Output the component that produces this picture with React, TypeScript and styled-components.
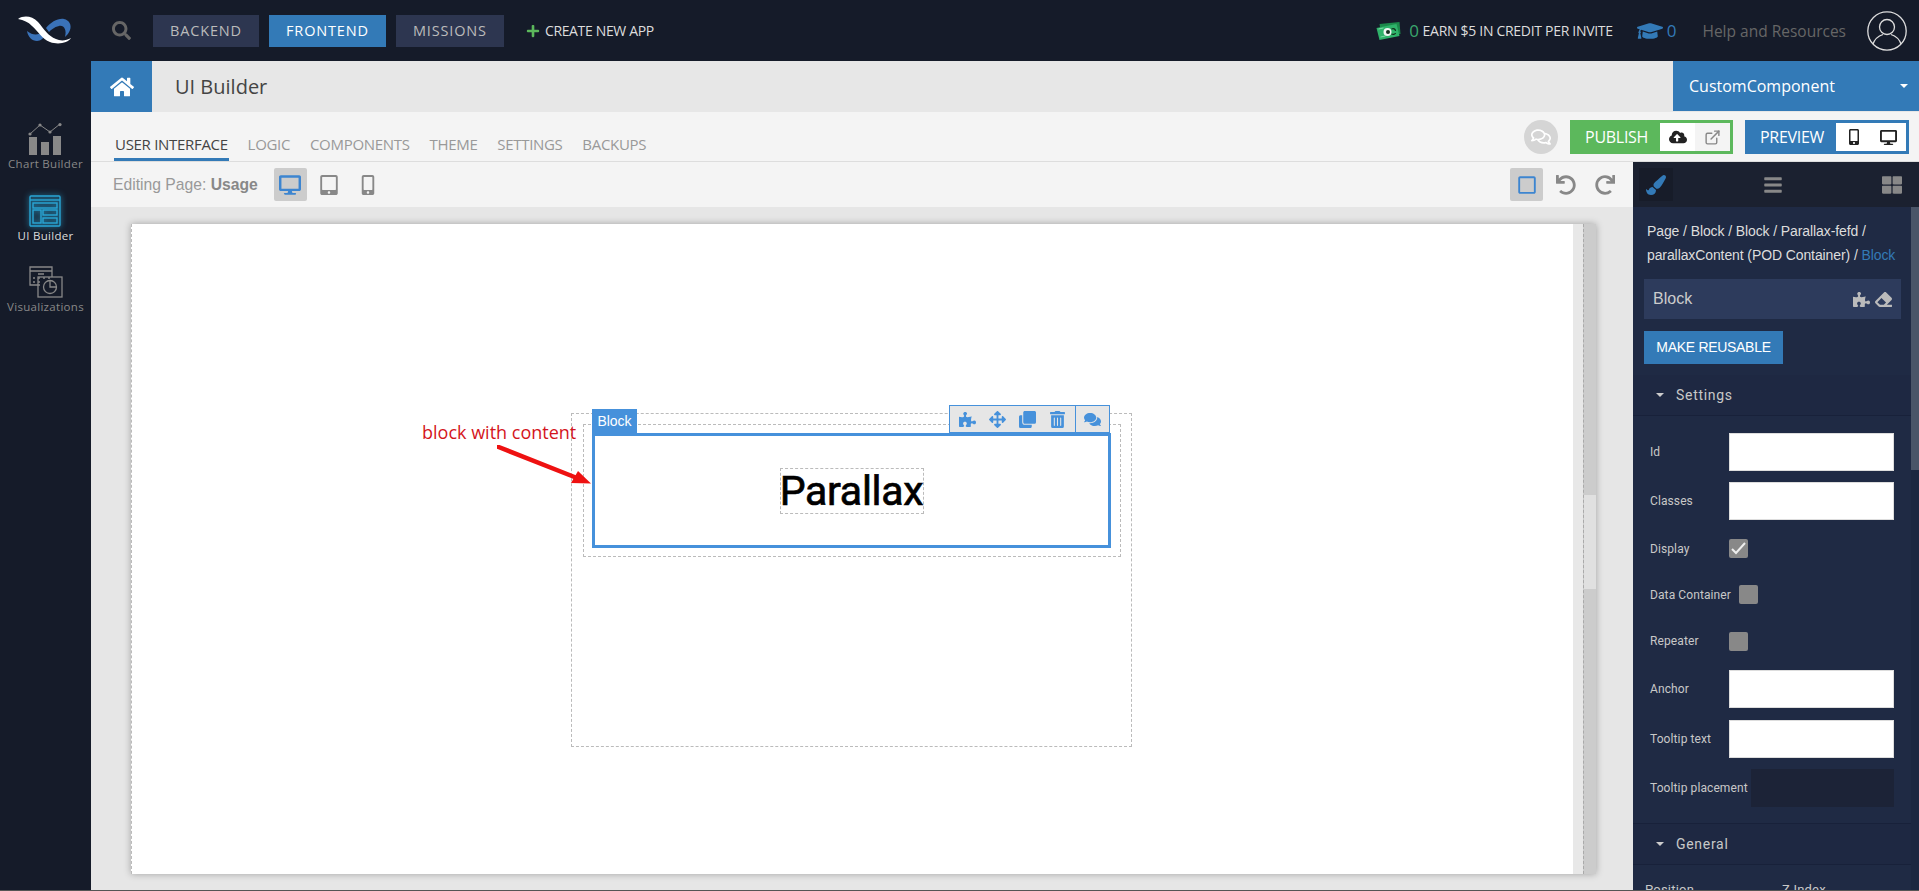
import React, { FC } from 'react';
import styled, { createGlobalStyle } from 'styled-components';
import {
    FaArrowsAlt,
    FaBars,
    FaClone,
    FaCloudUploadAlt,
    FaComments,
    FaDesktop,
    FaEraser,
    FaGraduationCap,
    FaHome,
    FaMobileAlt,
    FaPaintBrush,
    FaPlus,
    FaPuzzlePiece,
    FaRedo,
    FaRegComments,
    FaRegSquare,
    FaSearch,
    FaTabletAlt,
    FaThLarge,
    FaTrashAlt,
    FaUndo,
} from 'react-icons/fa';
import { FiExternalLink } from 'react-icons/fi';

const GlobalStyle = createGlobalStyle`
    html, body {
        margin: 0;
        padding: 0;
        height: 100%;
        overflow: hidden;
    }
    * {
        box-sizing: border-box;
    }
`;

const Root = styled.div`
    display: flex;
    flex-direction: column;
    height: 100vh;
    background: #151b29;
    border-bottom: 1px solid #555;
    font-family: 'Open Sans', sans-serif;
    overflow: hidden;
`;

const TopBar = styled.div`
    display: flex;
    align-items: center;
    flex: 0 0 61px;
    padding-left: 18px;
    background: #151b29;
`;

const LogoMark = styled.svg`
    width: 54px;
    height: 28px;
    margin-top: -1px;
`;

const SearchButton = styled.div`
    display: flex;
    margin: 0 22px 0 40px;
    color: #666;
    font-size: 19px;
`;

const NavButton = styled.div<{ $active?: boolean }>`
    display: flex;
    align-items: center;
    height: 32px;
    margin-right: 10px;
    padding: 0 17px;
    background: ${(p) => (p.$active ? '#337ab7' : '#2d3650')};
    color: ${(p) => (p.$active ? '#fff' : '#bbb')};
    font-size: 14.5px;
    letter-spacing: 0.85px;
`;

const CreateLink = styled.div`
    display: flex;
    align-items: center;
    gap: 5px;
    margin-left: 12px;
    color: #ddd;
    font-size: 14px;
    letter-spacing: -0.35px;

    svg {
        color: #5cb85c;
        font-size: 14px;
    }
`;

const TopRight = styled.div`
    display: flex;
    align-items: center;
    margin-left: auto;
    padding-right: 12px;
`;

const Credit = styled.div`
    display: flex;
    align-items: center;
    color: #ddd;
    font-size: 14px;
    letter-spacing: -0.3px;
`;

const CreditCount = styled.span`
    margin: 0 4px 0 7px;
    color: #3aa76d;
    font-size: 17px;
`;

const Learn = styled.div`
    display: flex;
    align-items: center;
    gap: 4px;
    margin-left: 24px;
    color: #337ab7;
    font-size: 17px;

    svg {
        font-size: 26px;
    }
`;

const HelpLink = styled.div`
    margin: 0 21px 0 26px;
    color: #666;
    font-size: 15.5px;
`;

const Body = styled.div`
    display: flex;
    flex: 1;
    min-height: 0;
`;

const Sidebar = styled.div`
    display: flex;
    flex-direction: column;
    align-items: center;
    flex: 0 0 91px;
    padding-top: 62px;
    background: #151b29;
`;

const SideItem = styled.div<{ $active?: boolean }>`
    display: flex;
    flex-direction: column;
    align-items: center;
    height: 71.5px;
    color: ${(p) => (p.$active ? '#ddd' : '#888')};
    font-size: 11.5px;
    letter-spacing: 0.3px;
    white-space: nowrap;

    svg {
        width: 34px;
        height: 32px;
        margin-bottom: 1px;
        ${(p) => p.$active && 'filter: drop-shadow(0 0 3px #2aa7d6);'}
    }
`;

const Main = styled.div`
    display: flex;
    flex-direction: column;
    flex: 1;
    min-width: 0;
`;

const Header = styled.div`
    display: flex;
    align-items: center;
    flex: 0 0 51px;
    background: #e7e7e7;
`;

const HomeButton = styled.div`
    display: flex;
    align-items: center;
    justify-content: center;
    width: 61px;
    height: 100%;
    background: #337ab7;
    color: #fff;
    font-size: 24px;
`;

const PageTitle = styled.div`
    margin-left: 23px;
    color: #444;
    font-size: 20px;
`;

const AppSelect = styled.div`
    display: flex;
    align-items: center;
    justify-content: space-between;
    width: 246px;
    height: 50px;
    margin-left: auto;
    margin-bottom: 1px;
    padding: 0 11px 0 16px;
    background: #337ab7;
    color: #fff;
    font-size: 16px;
`;

const Caret = styled.span<{ $color: string }>`
    display: inline-block;
    width: 0;
    height: 0;
    border-left: 4px solid transparent;
    border-right: 4px solid transparent;
    border-top: 4px solid ${(p) => p.$color};
`;

const TabsBar = styled.div`
    display: flex;
    align-items: flex-end;
    flex: 0 0 50px;
    padding: 0 10px 0 23px;
    background: #f4f4f4;
    border-bottom: 1px solid #ddd;
`;

const Tab = styled.div<{ $active?: boolean }>`
    height: 31px;
    margin-right: 17.8px;
    padding: 0 1px;
    border-bottom: 3px solid ${(p) => (p.$active ? '#337ab7' : 'transparent')};
    color: ${(p) => (p.$active ? '#444' : '#999')};
    font-size: 15px;
    letter-spacing: -0.3px;
    line-height: 28px;
    white-space: nowrap;
`;

const TabActions = styled.div`
    display: flex;
    align-items: center;
    gap: 12px;
    margin-left: auto;
    align-self: flex-start;
    margin-top: 8px;
`;

const ChatBubble = styled.div`
    display: flex;
    align-items: center;
    justify-content: center;
    width: 34px;
    height: 34px;
    border-radius: 50%;
    background: #d5d5d5;
    color: #fff;
    font-size: 20px;
`;

const ActionGroup = styled.div<{ $color: string }>`
    display: flex;
    align-items: center;
    height: 34px;
    border: 3px solid ${(p) => p.$color};
    background: ${(p) => p.$color};
    color: #fff;
    font-size: 16px;
    letter-spacing: -0.3px;
`;

const ActionLabel = styled.span`
    padding: 0 12px;
`;

const ActionIcon = styled.div<{ $shade?: boolean; $color: string; $size?: number }>`
    display: flex;
    align-items: center;
    justify-content: center;
    width: 35px;
    height: 28px;
    background: ${(p) => (p.$shade ? '#f4f4f4' : '#fff')};
    color: ${(p) => p.$color};
    font-size: ${(p) => p.$size || 16}px;
`;

const Workspace = styled.div`
    display: flex;
    flex: 1;
    min-height: 0;
`;

const Stage = styled.div`
    display: flex;
    flex-direction: column;
    flex: 1;
    min-width: 0;
    background: #e6e6e6;
`;

const EditBar = styled.div`
    display: flex;
    align-items: center;
    flex: 0 0 45px;
    padding: 0 6px 0 22px;
    background: #f4f4f4;
`;

const EditLabel = styled.div`
    margin-right: 16px;
    color: #999;
    font-family: 'Liberation Sans', Arial, sans-serif;
    font-size: 15.7px;

    b {
        color: #888;
    }
`;

const ToolButton = styled.div<{ $active?: boolean; $color?: string; $size?: number }>`
    display: flex;
    align-items: center;
    justify-content: center;
    width: 33px;
    height: 33px;
    margin-right: 6px;
    border-radius: 2px;
    background: ${(p) => (p.$active ? '#ccc' : 'transparent')};
    color: ${(p) => p.$color || '#888'};
    font-size: ${(p) => p.$size || 20}px;
`;

const EditRight = styled.div`
    display: flex;
    align-items: center;
    margin-left: auto;
`;

const Canvas = styled.div`
    flex: 1;
    min-height: 0;
    padding: 17px 37px 16px 40px;
`;

const PageFrame = styled.div`
    display: flex;
    height: 100%;
    background: #e8e8e8;
    box-shadow: 0 0 7px rgba(0, 0, 0, 0.3);
`;

const PageSheet = styled.div`
    flex: 1;
    min-width: 0;
    padding: 189px 0 0 439px;
    background: #fff;
    border-left: 1px dashed #bbb;
`;

const PageScroll = styled.div`
    display: flex;
    flex: 0 0 23px;
    padding-left: 10px;
`;

const PageTrack = styled.div`
    flex: 1;
    padding-top: 271px;
    background: #ccc;
    border-left: 1px dashed #aaa;
`;

const PageThumb = styled.div`
    height: 94px;
    background: #e0e0e0;
`;

const OuterDashed = styled.div`
    position: relative;
    width: 561px;
    height: 334px;
    padding: 10px 10px 0 11px;
    border: 1px dashed #bbb;
`;

const InnerDashed = styled.div`
    width: 538px;
    height: 133px;
    padding: 8px 9px 8px 8px;
    border: 1px dashed #bbb;
`;

const SelectedBlock = styled.div`
    position: relative;
    display: flex;
    align-items: center;
    justify-content: center;
    height: 100%;
    border: 3px solid #4691db;
`;

const BlockTag = styled.div`
    position: absolute;
    left: -3px;
    top: -27px;
    display: flex;
    align-items: center;
    justify-content: center;
    width: 45px;
    height: 24px;
    background: #4691db;
    color: #fff;
    font-family: 'Liberation Sans', Arial, sans-serif;
    font-size: 14px;
`;

const BlockTools = styled.div`
    position: absolute;
    right: -2px;
    top: -31px;
    display: flex;
    height: 28px;
    border: 1px solid #4691db;
    background: #e6e6e6;
    color: #4691db;
    font-size: 17px;
`;

const ToolGroup = styled.div<{ $divided?: boolean }>`
    display: flex;
    align-items: center;
    gap: 13px;
    padding: 0 ${(p) => (p.$divided ? 8 : 9)}px;
    ${(p) => p.$divided && 'border-left: 1px solid #4691db;'}
`;

const BlockText = styled.div`
    display: flex;
    align-items: center;
    justify-content: center;
    width: 144px;
    height: 46px;
    border: 1px dashed #bbb;
    color: #000;
    font-family: Roboto, Arial, sans-serif;
    font-size: 41px;
    font-weight: 400;
    letter-spacing: -0.3px;
    -webkit-text-stroke: 0.7px #000;
    white-space: nowrap;
`;

const Annotation = styled.div`
    position: absolute;
    left: -150px;
    top: 6px;
    color: #d4141c;
    font-size: 18px;
    white-space: nowrap;
`;

const AnnotationArrow = styled.svg`
    position: absolute;
    left: -75px;
    top: 31px;
    width: 96px;
    height: 42px;
`;

const Panel = styled.div`
    display: flex;
    flex-direction: column;
    flex: 0 0 286px;
    background: #1f2a44;
    font-family: 'Liberation Sans', Arial, sans-serif;
`;

const PanelTabs = styled.div`
    display: flex;
    align-items: center;
    justify-content: space-between;
    flex: 0 0 45px;
    padding: 0 17px 0 6px;
    background: #1b2130;
    color: #888;
    font-size: 20px;
`;

const BrushTab = styled.div`
    display: flex;
    align-items: center;
    justify-content: center;
    width: 34px;
    height: 33px;
    background: #171c29;
    color: #337ab7;
`;

const BarsIcon = styled(FaBars)`
    margin-right: 10px;
`;

const PanelBody = styled.div`
    display: flex;
    flex: 1;
    min-height: 0;
`;

const PanelContent = styled.div`
    flex: 1;
    min-width: 0;
    overflow: hidden;
`;

const PanelScroll = styled.div`
    flex: 0 0 8px;
    background: #1c2740;
`;

const PanelThumb = styled.div`
    height: 263px;
    background: #4a5568;
`;

const Crumbs = styled.div`
    padding: 12px 0 0 14px;
    color: #ddd;
    font-size: 14px;
    line-height: 24px;
    letter-spacing: -0.1px;
    white-space: nowrap;

    span {
        color: #337ab7;
    }
`;

const BlockRow = styled.div`
    display: flex;
    align-items: center;
    justify-content: space-between;
    height: 40px;
    margin: 12px 10px 0 11px;
    padding: 0 9px 0 9px;
    background: #2d3b5c;
    color: #ccc;
    font-size: 16px;
`;

const BlockRowIcons = styled.div`
    display: flex;
    gap: 5px;
    font-size: 17px;
    color: #bbb;
`;

const ReuseButton = styled.div`
    display: flex;
    align-items: center;
    justify-content: center;
    width: 139px;
    height: 33px;
    margin: 12px 0 11px 11px;
    padding-bottom: 2px;
    background: #337ab7;
    color: #fff;
    font-size: 14px;
    letter-spacing: -0.3px;
`;

const SectionHead = styled.div`
    display: flex;
    align-items: center;
    gap: 12px;
    height: 41px;
    padding-left: 23px;
    background: #1e2842;
    border-bottom: 1px solid #18213a;
    color: #c8c8c8;
    font-family: Roboto, Arial, sans-serif;
    font-size: 14px;
    letter-spacing: 0.7px;
`;

const FieldList = styled.div`
    padding: 11.5px 17px 10px 17px;
    border-bottom: 1px solid #18213a;
`;

const FieldRow = styled.div<{ $h: number }>`
    display: flex;
    align-items: center;
    height: ${(p) => p.$h}px;
`;

const FieldLabel = styled.div<{ $gap?: number }>`
    ${(p) => (p.$gap ? `margin-right: ${p.$gap}px;` : 'flex: 0 0 79px;')}
    color: #c8c8c8;
    font-family: Roboto, Arial, sans-serif;
    font-size: 12px;
    letter-spacing: 0.1px;
    white-space: nowrap;
`;

const TextInput = styled.div`
    flex: 1;
    height: 38px;
    background: #fff;
    border: 1px solid #ddd;
`;

const DarkSelect = styled.div`
    flex: 1;
    height: 38px;
    background: #1c2337;
`;

const CheckBox = styled.div`
    display: flex;
    align-items: center;
    justify-content: center;
    width: 19px;
    height: 19px;
    border-radius: 2px;
    background: #888;
`;

const ClippedLabels = styled.div`
    display: flex;
    gap: 88px;
    padding: 17px 0 0 12px;
    color: #c8c8c8;
    font-family: Roboto, Arial, sans-serif;
    font-size: 13px;
    letter-spacing: 0.2px;
`;

interface FieldProps {
    label: string;
    height: number;
    labelGap?: number;
    children: React.ReactNode;
}

const Field: FC<FieldProps> = ({ label, height, labelGap, children }) => (
    <FieldRow $h={height}>
        <FieldLabel $gap={labelGap}>{label}</FieldLabel>
        {children}
    </FieldRow>
);

const Logo = () => (
    <LogoMark viewBox="0 0 54 28">
        <path d="M28 12C33 6 40 2 46 3C51 4 54 9 52 14C51 17 49 19 47 21C49 14 46 9 41 10C36 11 33 14 31 16Z" fill="#3a72b8" />
        <path d="M9 15C10 21 14 25 19 25C23 25 25 22 27 20L24 16C21 19 15 20 9 15Z" fill="#3a72b8" />
        <path d="M0 3C6 -1 14 0 20 6C26 13 30 20 38 23C42 25 48 25 53 22C50 27 40 29 32 26C24 23 20 15 14 10C10 6 6 4 0 3Z" fill="#fff" />
    </LogoMark>
);

const MoneyIcon = () => (
    <svg width="27" height="20" viewBox="0 0 26 20">
        <path d="M4 3L24 1L25 13L6 15Z" fill="#1c8a4b" />
        <path d="M1 7L21 3L24 15L4 19Z" fill="#2fb36a" />
        <path d="M3 8L8 7M5 16L10 15" stroke="#7ad9a3" strokeWidth="1" />
        <circle cx="12" cy="11" r="4" fill="#f0f5f2" />
        <circle cx="12.5" cy="11" r="2" fill="#14301f" />
        <path d="M16 8C18 7 20 8 20 10M16 13C18 14 20 13 20 12" fill="none" stroke="#14301f" strokeWidth="1.2" />
    </svg>
);

const Avatar = () => (
    <svg width="40" height="40" viewBox="0 0 40 40" fill="none" stroke="#ddd" strokeWidth="1.3">
        <circle cx="20" cy="20" r="19.2" />
        <circle cx="20" cy="16" r="7.5" />
        <path d="M6 33C8 27 13 24.5 16 23.5M34 33C32 27 27 24.5 24 23.5" />
    </svg>
);

const ChartIcon = () => (
    <svg viewBox="0 0 34 32" fill="#888">
        <rect x="1" y="14" width="8" height="18" />
        <rect x="13" y="19" width="8" height="13" />
        <rect x="25" y="13" width="8" height="19" />
        <path d="M2 11L12 2L22 9L32 1" fill="none" stroke="#888" strokeWidth="1" />
        <circle cx="2" cy="11" r="1.6" />
        <circle cx="12" cy="2" r="1.6" />
        <circle cx="22" cy="9" r="1.6" />
        <circle cx="32" cy="1.6" r="1.6" />
    </svg>
);

const LayoutIcon = () => (
    <svg viewBox="0 0 34 32" fill="none" stroke="#2aa7d6" strokeWidth="1.4">
        <rect x="2" y="1" width="30" height="30" rx="1" />
        <path d="M2 5H32" />
        <rect x="5" y="8" width="24" height="5" />
        <rect x="5" y="15" width="8" height="13" />
        <rect x="15" y="15" width="14" height="5" />
        <rect x="15" y="23" width="14" height="5" />
    </svg>
);

const VisualIcon = () => (
    <svg viewBox="0 0 34 32" fill="none" stroke="#888" strokeWidth="1.3">
        <path d="M11 19H1V1H23V11" />
        <path d="M1 5H23M9 8H15M4 12H6M9 12H11M14 12H16M19 12H21M4 16H6M9 16H11" />
        <rect x="9" y="11" width="24" height="20" />
        <circle cx="21" cy="21" r="6.5" />
        <path d="M21 15V21H27" />
    </svg>
);

const CheckMark = () => (
    <svg width="15" height="13" viewBox="0 0 15 13" fill="none" stroke="#eee" strokeWidth="2">
        <path d="M1 7L5 11L14 1" />
    </svg>
);

const tabs = ['USER INTERFACE', 'LOGIC', 'COMPONENTS', 'THEME', 'SETTINGS', 'BACKUPS'];

export default function App() {
    return (
        <Root>
            <GlobalStyle />
            <TopBar>
                <Logo />
                <SearchButton>
                    <FaSearch />
                </SearchButton>
                <NavButton>BACKEND</NavButton>
                <NavButton $active>FRONTEND</NavButton>
                <NavButton>MISSIONS</NavButton>
                <CreateLink>
                    <FaPlus />
                    CREATE NEW APP
                </CreateLink>
                <TopRight>
                    <Credit>
                        <MoneyIcon />
                        <CreditCount>0</CreditCount>
                        EARN $5 IN CREDIT PER INVITE
                    </Credit>
                    <Learn>
                        <FaGraduationCap />0
                    </Learn>
                    <HelpLink>Help and Resources</HelpLink>
                    <Avatar />
                </TopRight>
            </TopBar>
            <Body>
                <Sidebar>
                    <SideItem>
                        <ChartIcon />
                        Chart Builder
                    </SideItem>
                    <SideItem $active>
                        <LayoutIcon />
                        UI Builder
                    </SideItem>
                    <SideItem>
                        <VisualIcon />
                        Visualizations
                    </SideItem>
                </Sidebar>
                <Main>
                    <Header>
                        <HomeButton>
                            <FaHome />
                        </HomeButton>
                        <PageTitle>UI Builder</PageTitle>
                        <AppSelect>
                            CustomComponent
                            <Caret $color="#fff" />
                        </AppSelect>
                    </Header>
                    <TabsBar>
                        {tabs.map((t, i) => (
                            <Tab key={t} $active={i === 0}>
                                {t}
                            </Tab>
                        ))}
                        <TabActions>
                            <ChatBubble>
                                <FaRegComments />
                            </ChatBubble>
                            <ActionGroup $color="#5cb85c">
                                <ActionLabel>PUBLISH</ActionLabel>
                                <ActionIcon $color="#222" $size={18}>
                                    <FaCloudUploadAlt />
                                </ActionIcon>
                                <ActionIcon $shade $color="#888" $size={17}>
                                    <FiExternalLink />
                                </ActionIcon>
                            </ActionGroup>
                            <ActionGroup $color="#337ab7">
                                <ActionLabel>PREVIEW</ActionLabel>
                                <ActionIcon $color="#222">
                                    <FaMobileAlt />
                                </ActionIcon>
                                <ActionIcon $color="#222" $size={17}>
                                    <FaDesktop />
                                </ActionIcon>
                            </ActionGroup>
                        </TabActions>
                    </TabsBar>
                    <Workspace>
                        <Stage>
                            <EditBar>
                                <EditLabel>
                                    Editing Page: <b>Usage</b>
                                </EditLabel>
                                <ToolButton $active $color="#3d85d0" $size={22}>
                                    <FaDesktop />
                                </ToolButton>
                                <ToolButton>
                                    <FaTabletAlt />
                                </ToolButton>
                                <ToolButton>
                                    <FaMobileAlt />
                                </ToolButton>
                                <EditRight>
                                    <ToolButton $active $color="#3d85d0">
                                        <FaRegSquare />
                                    </ToolButton>
                                    <ToolButton>
                                        <FaUndo />
                                    </ToolButton>
                                    <ToolButton>
                                        <FaRedo />
                                    </ToolButton>
                                </EditRight>
                            </EditBar>
                            <Canvas>
                                <PageFrame>
                                    <PageSheet>
                                        <OuterDashed>
                                            <Annotation>block with content</Annotation>
                                            <AnnotationArrow viewBox="0 0 96 42">
                                                <path d="M1.5 2L80 33" stroke="#ee1111" strokeWidth="4.5" strokeLinecap="round" />
                                                <path d="M94 38.5L74 38L81 26Z" fill="#ee1111" />
                                            </AnnotationArrow>
                                            <InnerDashed>
                                                <SelectedBlock>
                                                    <BlockTag>Block</BlockTag>
                                                    <BlockTools>
                                                        <ToolGroup>
                                                            <FaPuzzlePiece />
                                                            <FaArrowsAlt />
                                                            <FaClone />
                                                            <FaTrashAlt />
                                                        </ToolGroup>
                                                        <ToolGroup $divided>
                                                            <FaComments />
                                                        </ToolGroup>
                                                    </BlockTools>
                                                    <BlockText>Parallax</BlockText>
                                                </SelectedBlock>
                                            </InnerDashed>
                                        </OuterDashed>
                                    </PageSheet>
                                    <PageScroll>
                                        <PageTrack>
                                            <PageThumb />
                                        </PageTrack>
                                    </PageScroll>
                                </PageFrame>
                            </Canvas>
                        </Stage>
                        <Panel>
                            <PanelTabs>
                                <BrushTab>
                                    <FaPaintBrush />
                                </BrushTab>
                                <BarsIcon />
                                <FaThLarge />
                            </PanelTabs>
                            <PanelBody>
                                <PanelContent>
                                    <Crumbs>
                                        Page / Block / Block / Parallax-fefd /
                                        <br />
                                        parallaxContent (POD Container) / <span>Block</span>
                                    </Crumbs>
                                    <BlockRow>
                                        Block
                                        <BlockRowIcons>
                                            <FaPuzzlePiece />
                                            <FaEraser />
                                        </BlockRowIcons>
                                    </BlockRow>
                                    <ReuseButton>MAKE REUSABLE</ReuseButton>
                                    <SectionHead>
                                        <Caret $color="#ccc" />
                                        Settings
                                    </SectionHead>
                                    <FieldList>
                                        <Field label="Id" height={49}>
                                            <TextInput />
                                        </Field>
                                        <Field label="Classes" height={49}>
                                            <TextInput />
                                        </Field>
                                        <Field label="Display" height={46}>
                                            <CheckBox>
                                                <CheckMark />
                                            </CheckBox>
                                        </Field>
                                        <Field label="Data Container" height={46} labelGap={8}>
                                            <CheckBox />
                                        </Field>
                                        <Field label="Repeater" height={47}>
                                            <CheckBox />
                                        </Field>
                                        <Field label="Anchor" height={49}>
                                            <TextInput />
                                        </Field>
                                        <Field label="Tooltip text" height={50}>
                                            <TextInput />
                                        </Field>
                                        <Field label="Tooltip placement" height={49} labelGap={3.5}>
                                            <DarkSelect />
                                        </Field>
                                    </FieldList>
                                    <SectionHead>
                                        <Caret $color="#ccc" />
                                        General
                                    </SectionHead>
                                    <ClippedLabels>
                                        <span>Position</span>
                                        <span>Z Index</span>
                                    </ClippedLabels>
                                </PanelContent>
                                <PanelScroll>
                                    <PanelThumb />
                                </PanelScroll>
                            </PanelBody>
                        </Panel>
                    </Workspace>
                </Main>
            </Body>
        </Root>
    );
}
